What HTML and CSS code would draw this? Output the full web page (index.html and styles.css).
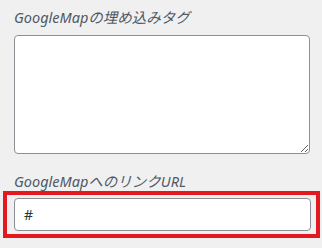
FILE: index.html
```html
<!DOCTYPE html>
<html lang="ja">
<head>
    <meta charset="UTF-8">
    <meta name="viewport" content="width=device-width, initial-scale=1.0">
    <title>GoogleMap</title>
    <link rel="stylesheet" href="styles.css">
</head>
<body>
    <div class="panel">
        <div class="field">
            <label class="label" for="embed">GoogleMapの埋め込みタグ</label>
            <textarea id="embed" class="textarea"></textarea>
        </div>
        <div class="field">
            <label class="label second" for="link">GoogleMapへのリンクURL</label>
        </div>
        <div class="highlight">
            <input id="link" class="input" type="text" value="#">
        </div>
    </div>
</body>
</html>
```

FILE: styles.css
```css
body{
    margin: 0;
    background: #f0f0f1;
    font-family: "Noto Sans", "Noto Sans CJK JP", sans-serif;
}
.panel{
    padding-top: 7px;
    width: 322px;
}
.field{
    padding-left: 14px;
}
.label{
    display: block;
    font-size: 14.5px;
    line-height: 20px;
    font-style: italic;
    font-synthesis: style;
    color: #4f5863;
    margin-bottom: 8px;
}
.label.second{
    margin-top: 17px;
    margin-bottom: 0;
}
.textarea{
    display: block;
    box-sizing: border-box;
    width: 296px;
    height: 119px;
    margin: 0;
    border: 1px solid #8c8f94;
    border-radius: 4px;
    background: #fff;
}
.highlight{
    margin-left: 3px;
    width: 317px;
    height: 47px;
    box-sizing: border-box;
    border: 4px solid #e3191f;
    padding: 3px 0 0 7px;
}
.input{
    display: block;
    box-sizing: border-box;
    width: 297px;
    height: 33px;
    margin: 0;
    padding: 0 9px;
    border: 1px solid #8c8f94;
    border-radius: 4px;
    background: #fff;
    font-family: "Noto Sans", sans-serif;
    font-size: 14px;
    color: #2c3338;
}
```
